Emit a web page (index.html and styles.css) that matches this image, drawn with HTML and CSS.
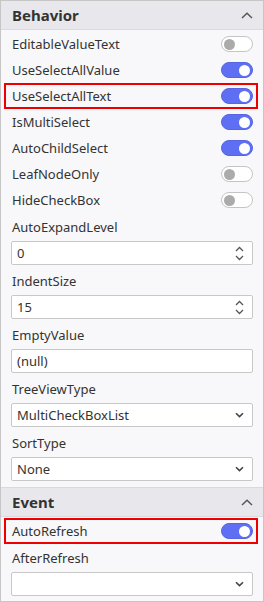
FILE: index.html
```html
<!DOCTYPE html>
<html>
<head>
<meta charset="utf-8">
<link rel="stylesheet" href="styles.css">
</head>
<body>
<div class="panel">
  <section class="group">
    <div class="group-head">
      <span class="group-title">Behavior</span>
      <svg class="chev-up" width="12" height="7" viewBox="0 0 12 7"><path d="M1 6 L6 1.2 L11 6" fill="none" stroke="#555" stroke-width="1.4"/></svg>
    </div>
    <div class="group-body">
      <div class="row"><span class="name">EditableValueText</span><span class="toggle"></span></div>
      <div class="row"><span class="name">UseSelectAllValue</span><span class="toggle on"></span></div>
      <div class="row hl"><span class="name">UseSelectAllText</span><span class="toggle on"></span></div>
      <div class="row"><span class="name">IsMultiSelect</span><span class="toggle on"></span></div>
      <div class="row"><span class="name">AutoChildSelect</span><span class="toggle on"></span></div>
      <div class="row"><span class="name">LeafNodeOnly</span><span class="toggle"></span></div>
      <div class="row"><span class="name">HideCheckBox</span><span class="toggle"></span></div>
      <div class="field">
        <div class="label">AutoExpandLevel</div>
        <div class="input"><span class="val">0</span>
          <svg class="spin" width="9" height="15" viewBox="0 0 9 15"><path d="M1 5 L4.5 1.5 L8 5" fill="none" stroke="#555" stroke-width="1.3"/><path d="M1 10 L4.5 13.5 L8 10" fill="none" stroke="#555" stroke-width="1.3"/></svg>
        </div>
      </div>
      <div class="field">
        <div class="label">IndentSize</div>
        <div class="input"><span class="val">15</span>
          <svg class="spin" width="9" height="15" viewBox="0 0 9 15"><path d="M1 5 L4.5 1.5 L8 5" fill="none" stroke="#555" stroke-width="1.3"/><path d="M1 10 L4.5 13.5 L8 10" fill="none" stroke="#555" stroke-width="1.3"/></svg>
        </div>
      </div>
      <div class="field">
        <div class="label">EmptyValue</div>
        <div class="input"><span class="val">(null)</span></div>
      </div>
      <div class="field">
        <div class="label">TreeViewType</div>
        <div class="input"><span class="val">MultiCheckBoxList</span>
          <svg class="caret" width="9" height="6" viewBox="0 0 9 6"><path d="M1 1.2 L4.5 4.6 L8 1.2" fill="none" stroke="#444" stroke-width="1.6"/></svg>
        </div>
      </div>
      <div class="field">
        <div class="label">SortType</div>
        <div class="input"><span class="val">None</span>
          <svg class="caret" width="9" height="6" viewBox="0 0 9 6"><path d="M1 1.2 L4.5 4.6 L8 1.2" fill="none" stroke="#444" stroke-width="1.6"/></svg>
        </div>
      </div>
    </div>
  </section>
  <section class="group next">
    <div class="group-head">
      <span class="group-title">Event</span>
      <svg class="chev-up" width="12" height="7" viewBox="0 0 12 7"><path d="M1 6 L6 1.2 L11 6" fill="none" stroke="#555" stroke-width="1.4"/></svg>
    </div>
    <div class="group-body">
      <div class="row hl"><span class="name">AutoRefresh</span><span class="toggle on"></span></div>
      <div class="field">
        <div class="label">AfterRefresh</div>
        <div class="input"><span class="val"></span>
          <svg class="caret" width="9" height="6" viewBox="0 0 9 6"><path d="M1 1.2 L4.5 4.6 L8 1.2" fill="none" stroke="#444" stroke-width="1.6"/></svg>
        </div>
      </div>
    </div>
  </section>
</div>
</body>
</html>
```
FILE: styles.css
```css
* { box-sizing: border-box; }
html, body { margin: 0; padding: 0; }
body {
  font-family: "Noto Sans", "Open Sans", sans-serif;
  font-size: 13px;
  color: #333;
  background: #fff;
}
.panel {
  width: 264px;
  height: 602px;
  border: 1px solid #c6c6c6;
  background: #f8f8fa;
  overflow: hidden;
}
.group-head {
  height: 29px;
  background: #e8e8ec;
  border-bottom: 1px solid #dadade;
  display: flex;
  align-items: center;
  justify-content: space-between;
  padding: 0 10px 0 11px;
}
.group.next .group-head { border-top: 1px solid #dadade; height: 30px; }
.group-title {
  font-weight: bold;
  font-size: 15px;
  color: #333;
}
.chev-up { display: block; }
.group-body {
  padding: 1px 5px 4px 3px;
}
.row {
  height: 26px;
  display: flex;
  align-items: center;
  justify-content: space-between;
  padding: 0 5px 0 8px;
}
.row.hl { box-shadow: inset 0 0 0 2px #ee0000; }
.toggle {
  width: 32px;
  height: 16px;
  border-radius: 8px;
  border: 1px solid #c4c4c4;
  background: #fff;
  display: flex;
  align-items: center;
  padding: 0 2px;
}
.toggle::after {
  content: "";
  width: 11px;
  height: 11px;
  border-radius: 50%;
  background: #ababab;
}
.toggle.on {
  background: #5f6ff3;
  border-color: #5566e0;
  justify-content: flex-end;
}
.toggle.on::after { background: #fff; }
.field { margin-bottom: 2px; }
.label {
  height: 28px;
  display: flex;
  align-items: center;
  padding-left: 8px;
}
.input {
  height: 24px;
  margin: 0 5px 0 7px;
  background: #fff;
  border: 1px solid #c8c8c8;
  border-radius: 2px;
  display: flex;
  align-items: center;
  justify-content: space-between;
  padding: 0 8px 0 5px;
}
.spin, .caret { display: block; }
```
